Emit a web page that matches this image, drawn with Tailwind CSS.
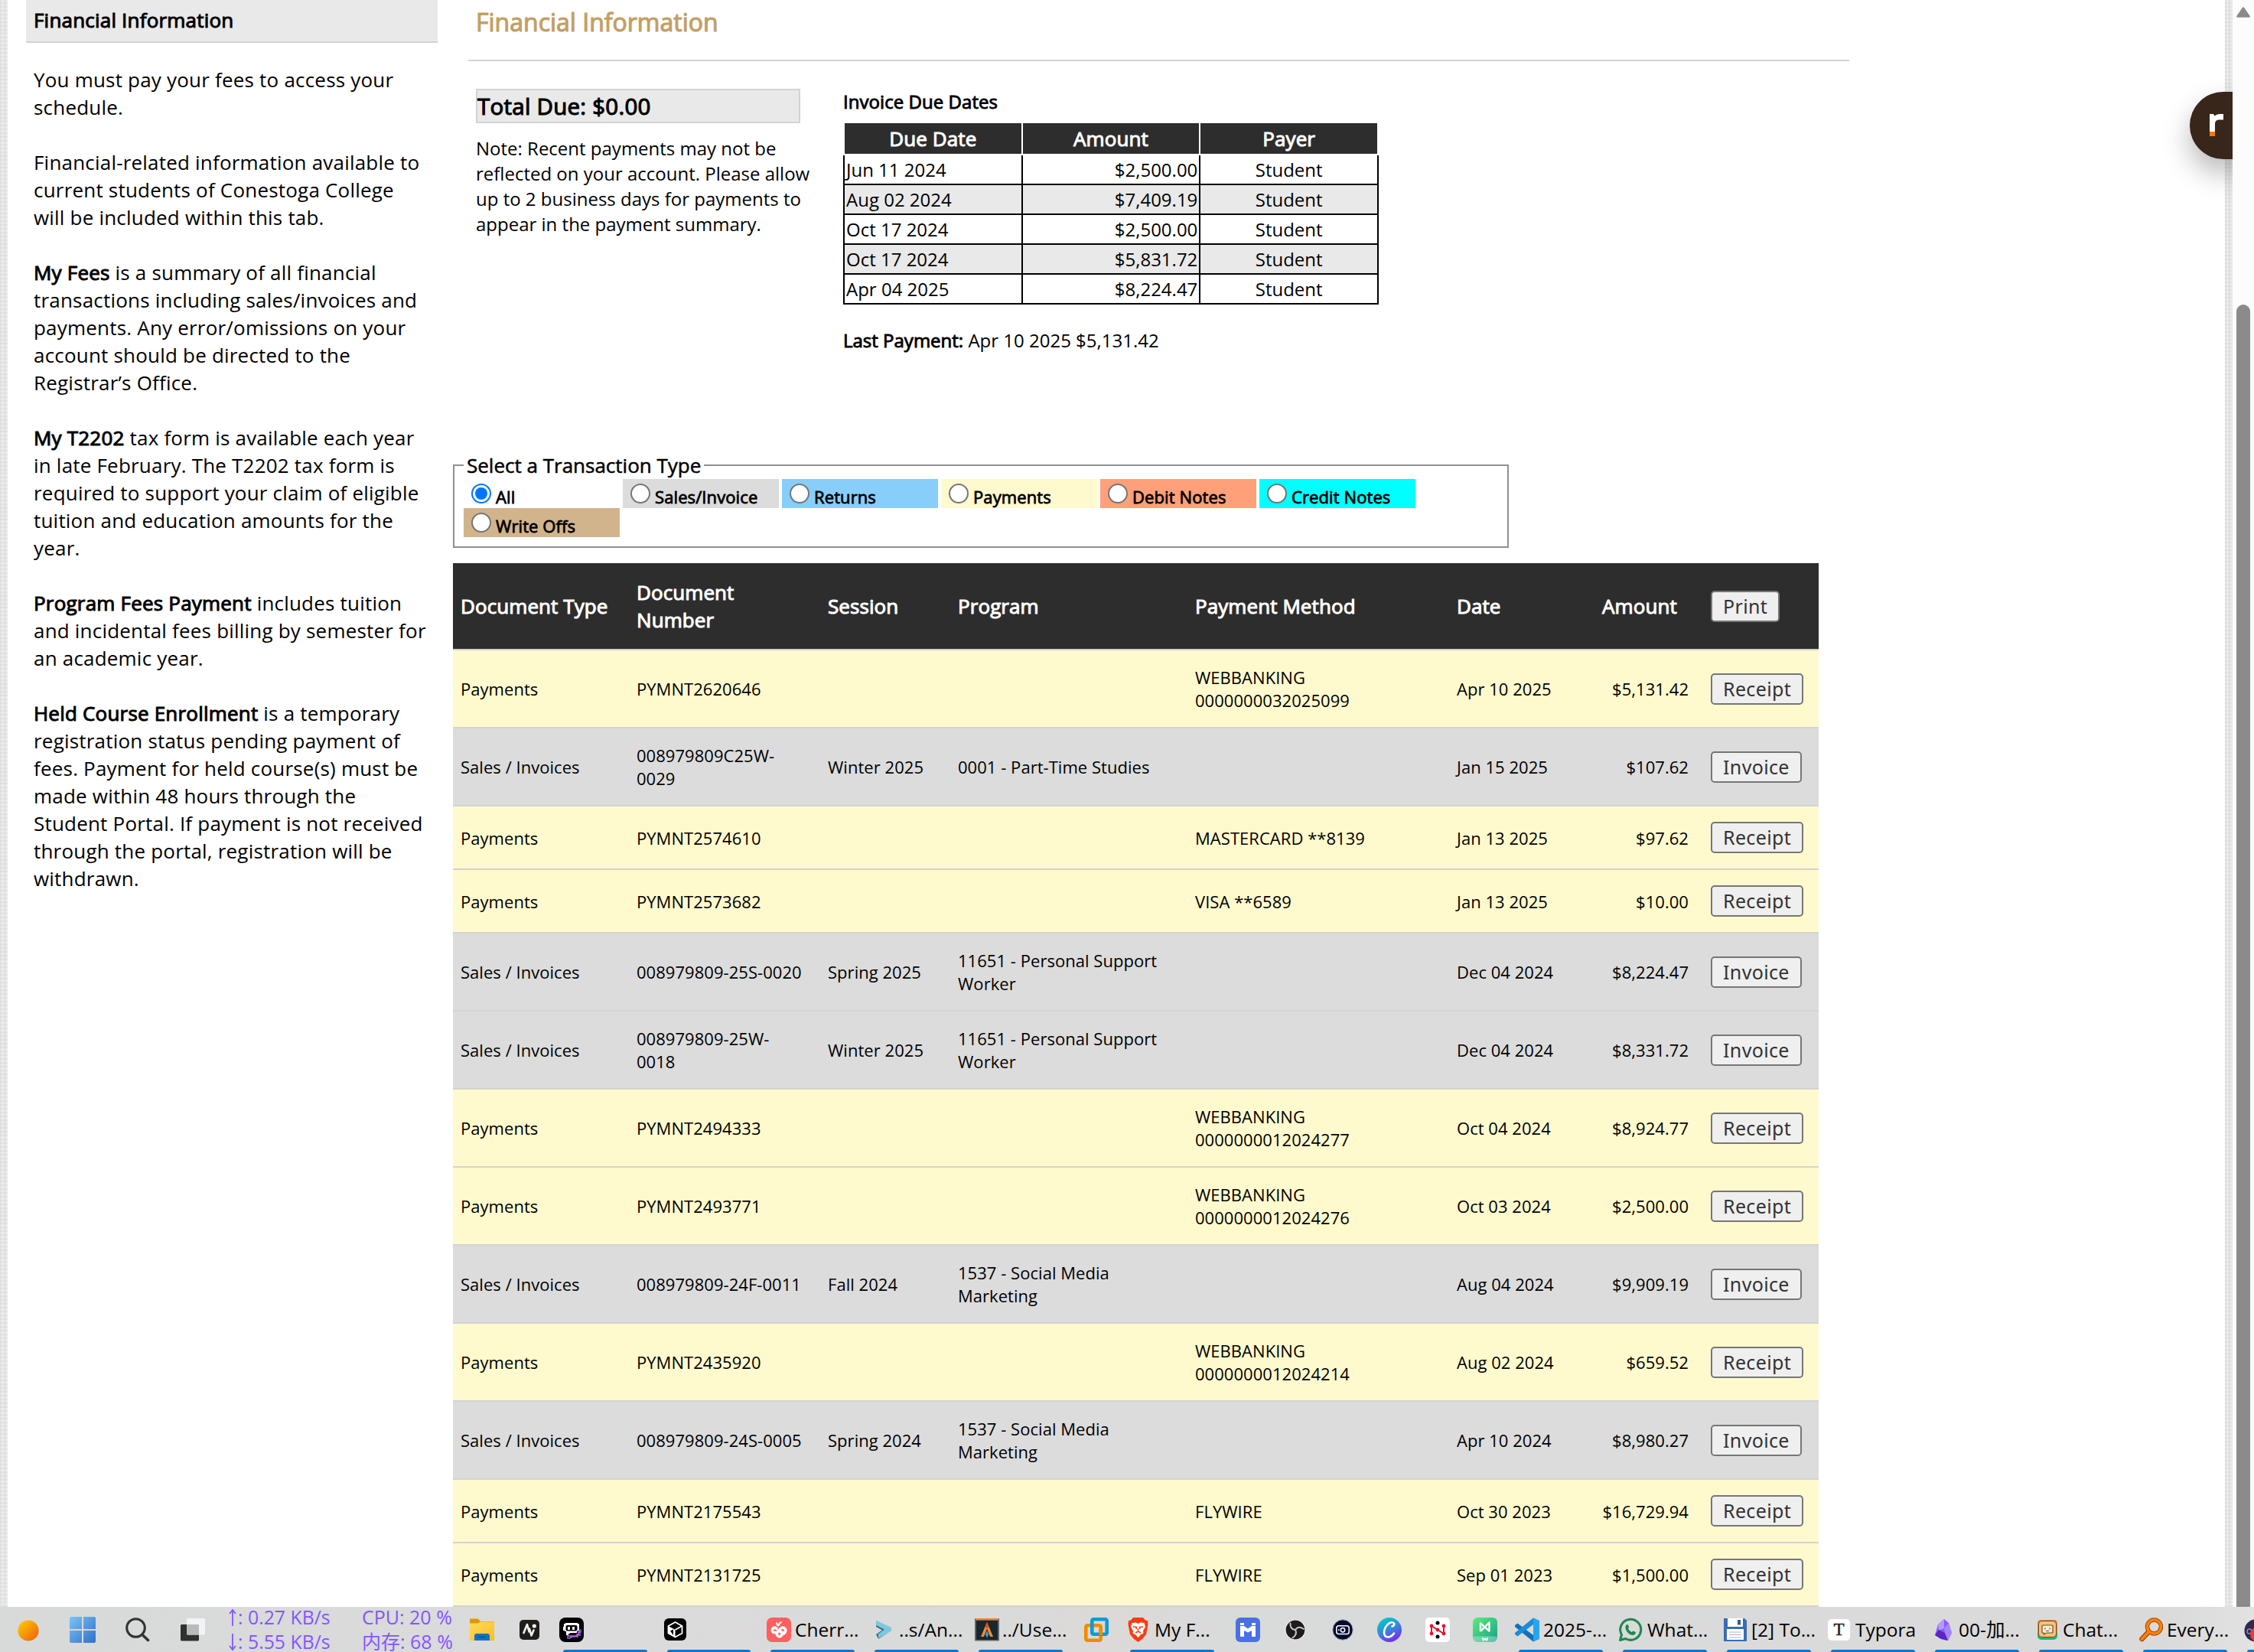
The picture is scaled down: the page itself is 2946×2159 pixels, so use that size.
<!DOCTYPE html>
<html lang="en">
<head>
<meta charset="utf-8">
<title>Financial Information</title>
<script src="https://cdn.jsdelivr.net/npm/@tailwindcss/browser@4"></script>
</head>
<body class="w-[2946px] h-[2159px] overflow-hidden flex flex-col bg-white text-black font-['Open_Sans','Noto_Sans_CJK_SC',sans-serif]">

<div class="flex h-[2100px] overflow-hidden">
  <div class="w-[10px] shrink-0 bg-[#ebebeb] bg-[repeating-linear-gradient(0deg,rgba(0,0,0,0.035)_0_2px,transparent_2px_5px),repeating-linear-gradient(90deg,rgba(0,0,0,0.035)_0_2px,transparent_2px_5px)]"></div>

  <!-- Left sidebar -->
  <aside class="w-[538px] ml-6 shrink-0 text-[26px] leading-[36px] tracking-[0.2px]">
    <h2 class="h-[56px] pt-[8px] pl-[10px] bg-[#e9e9e9] border-b-2 border-[#d3d3d3] [-webkit-text-stroke:1px_#000]">Financial Information</h2>
    <div class="mt-[30px] pl-[10px] flex flex-col gap-9 whitespace-nowrap">
      <p>You must pay your fees to access your<br>schedule.</p>
      <p>Financial-related information available to<br>current students of Conestoga College<br>will be included within this tab.</p>
      <p><b class="font-normal [-webkit-text-stroke:1px_#000]">My Fees</b> is a summary of all financial<br>transactions including sales/invoices and<br>payments. Any error/omissions on your<br>account should be directed to the<br>Registrar’s Office.</p>
      <p><b class="font-normal [-webkit-text-stroke:1px_#000]">My T2202</b> tax form is available each year<br>in late February. The T2202 tax form is<br>required to support your claim of eligible<br>tuition and education amounts for the<br>year.</p>
      <p><b class="font-normal [-webkit-text-stroke:1px_#000]">Program Fees Payment</b> includes tuition<br>and incidental fees billing by semester for<br>an academic year.</p>
      <p><b class="font-normal [-webkit-text-stroke:1px_#000]">Held Course Enrollment</b> is a temporary<br>registration status pending payment of<br>fees. Payment for held course(s) must be<br>made within 48 hours through the<br>Student Portal. If payment is not received<br>through the portal, registration will be<br>withdrawn.</p>
    </div>
  </aside>

  <!-- Main column -->
  <main class="ml-5 w-[2316px] shrink-0 flex flex-col">
    <h1 class="ml-5 w-[1805px] h-[80px] shrink-0 pl-[10px] pt-[9px] border-b-2 border-[#d3d3d3] text-[32px] leading-[40px] text-[#c39f62] [-webkit-text-stroke:1.1px_#c39f62]">Financial Information</h1>

    <div class="flex mt-9 h-[474px] shrink-0 pl-[30px] text-[24px] leading-[33px] whitespace-nowrap">
      <div class="w-[480px] shrink-0">
        <div class="w-[424px] h-[45px] border-2 border-[#d3d3d3] bg-[#e9e9e9] text-[29.5px] leading-[41px] tracking-[0.25px] [-webkit-text-stroke:1.1px_#000]">Total Due: $0.00</div>
        <p class="mt-4">Note: Recent payments may not be<br>reflected on your account. Please allow<br>up to 2 business days for payments to<br>appear in the payment summary.</p>
      </div>
      <div class="w-[700px]">
        <div class="tracking-[0.05px] [-webkit-text-stroke:0.9px_#000]">Invoice Due Dates</div>
        <div class="mt-3 grid grid-cols-3 gap-[2px] px-[2px] text-center text-[26px] leading-[40px] tracking-[0.1px] text-white [-webkit-text-stroke:1px_#fff]">
          <div class="bg-[#2d2d2d]">Due Date</div><div class="bg-[#2d2d2d]">Amount</div><div class="bg-[#2d2d2d]">Payer</div>
        </div>
        <div id="due" class="mt-[2px] grid grid-cols-3 gap-[2px] px-[2px] pb-[2px] bg-black leading-[37px]"></div>
        <p class="mt-[30px]"><b class="font-normal [-webkit-text-stroke:0.9px_#000]">Last Payment:</b> Apr 10 2025 $5,131.42</p>
      </div>
    </div>

    <fieldset class="w-[1380px] h-[126px] shrink-0 border-2 border-[#909090] pl-3">
      <legend class="px-[4px] text-[26px] leading-[36px] [-webkit-text-stroke:0.5px_#000]">Select a Transaction Type</legend>
      <div id="types" class="flex flex-wrap gap-x-1 w-[1250px]"></div>
    </fieldset>

    <section id="tx" class="mt-5 w-[1785px] shrink-0">
      <div class="h-[114px] grid grid-cols-[230px_250px_170px_311px_342px_189px_142px_151px] items-center bg-[#2d2d2d] border-b-2 border-[#d3d3d3] text-white text-[26px] leading-[36px] tracking-[0.08px] [-webkit-text-stroke:1px_#fff]">
        <div class="pl-[10px]">Document Type</div><div class="pl-[10px]">Document<br>Number</div><div class="pl-[10px]">Session</div><div class="pl-[10px]">Program</div><div class="pl-[9px]">Payment Method</div><div class="pl-[9px]">Date</div><div class="pl-[10px]">Amount</div>
        <div class="pl-[10px] [-webkit-text-stroke:0px]"><button class="block h-[41px] px-[14px] rounded-[5px] border-2 border-[#767676] bg-[#efefef] text-[#333] font-['Noto_Sans',sans-serif] text-[25px] leading-[37px] tracking-[0.35px]">Print</button></div>
      </div>
    </section>
  </main>

  <div class="w-[10px] shrink-0 bg-[#ebebeb] bg-[repeating-linear-gradient(0deg,rgba(0,0,0,0.035)_0_2px,transparent_2px_5px),repeating-linear-gradient(90deg,rgba(0,0,0,0.035)_0_2px,transparent_2px_5px)]"></div>

  <!-- Scrollbar -->
  <div class="relative z-10 w-[28px] shrink-0 bg-[#fcfcfc] flex flex-col items-center">
    <svg class="mt-[9px] w-[18px] h-[14px] shrink-0" viewBox="0 0 18 14"><path d="M9 1.5 16.5 12.5H1.5Z" fill="#8b8b8b" stroke="#8b8b8b" stroke-width="2.6" stroke-linejoin="round"/></svg>
    <div class="mt-[375px] w-[18px] grow rounded-t-[9px] bg-[#8b8b8b]"></div>
  </div>
</div>

<!-- Floating side badge -->
<div class="absolute left-[2822px] top-[60px] w-[96px] h-[220px] overflow-hidden">
  <div class="absolute left-[40px] top-[60px] w-[70px] h-[88px] rounded-l-[44px] bg-[#38261b] shadow-[0_18px_36px_rgba(0,0,0,0.28)]">
    <svg class="absolute left-[26px] top-[29px] w-[18px] h-[29px]" viewBox="0 0 18 29"><path d="M0 0H5L6.5 2.5Q9 0 13 0H18V7.500H12.500Q7 7.500 7 13V29H0Z" fill="#fff"/><path d="M0 23H7V29H0Z" fill="#ff7800"/></svg>
  </div>
</div>

<!-- Taskbar -->
<footer class="h-[59px] shrink-0 pl-[23px] flex whitespace-nowrap bg-[linear-gradient(90deg,#d8d9d9,#dbdbdb_25%,#d9dada_45%,#dcd9d8_49%,#d9dada_54%,#dadada_96%,#e2e2e2)] text-[24.5px]">
  <div class="w-[68px] shrink-0 pt-[17px]"><svg width="28" height="28" viewBox="0 0 28 28"><defs><linearGradient id="sun" x1="0" y1="0" x2="1" y2="1"><stop offset="0.1" stop-color="#fdc500"/><stop offset="1" stop-color="#ef5b0c"/></linearGradient></defs><circle cx="14" cy="14" r="13.600" fill="url(#sun)"/></svg></div>
  <div class="w-[73px] shrink-0 pt-[13px]"><svg width="34" height="34" viewBox="0 0 34 34"><defs><linearGradient id="win" gradientUnits="userSpaceOnUse" x1="0" y1="0" x2="34" y2="34"><stop offset="0" stop-color="#7cc4f6"/><stop offset="1" stop-color="#2f6fcb"/></linearGradient></defs><path fill="url(#win)" d="M2 0H16V16H0V2Q0 0 2 0ZM18 0H32Q34 0 34 2V16H18ZM0 18H16V34H2Q0 34 0 32ZM18 18H34V32Q34 34 32 34H18Z"/></svg></div>
  <div class="w-[72px] shrink-0 pt-[14px]"><svg width="32" height="32" viewBox="0 0 32 32" fill="none" stroke="#333" stroke-linecap="round"><circle cx="13.500" cy="13.500" r="11.800" stroke-width="3"/><path d="M22 22.500 29.500 29.500" stroke-width="3.600"/></svg></div>
  <div class="w-[63px] shrink-0 pt-[15px]"><svg width="32" height="30" viewBox="0 0 32 30"><rect x="0" y="8" width="24" height="21.500" rx="1.500" fill="#303030"/><rect x="8" y="0" width="24" height="21.500" rx="1.500" fill="#f3f3f4"/><path d="M8 8H24V21.500H9.500Q8 21.500 8 20Z" fill="#b9babb"/></svg></div>
  <div class="w-[175px] shrink-0 flex flex-col gap-[5px] text-[24.8px] leading-[27px] text-[#8257ff]">
    <div class="flex items-center gap-[2px]"><svg width="10" height="24" viewBox="0 0 10 24" fill="none" stroke="#8257ff" stroke-width="1.800"><path d="M5 23V2M1 7 5 2 9 7"/></svg>: 0.27 KB/s</div>
    <div class="flex items-center gap-[2px]"><svg width="10" height="24" viewBox="0 0 10 24" fill="none" stroke="#8257ff" stroke-width="1.800"><path d="M5 1V22M1 17 5 22 9 17"/></svg>: 5.55 KB/s</div>
  </div>
  <div class="w-[140px] shrink-0 flex flex-col gap-[5px] text-[25px] leading-[27px] -ml-[1px] mr-[1px] text-[#8257ff]"><div class="h-[27px]">CPU: 20 %</div><div class="h-[27px]">内存: 68 %</div></div>
  <div class="w-[65px] shrink-0 pt-[15px]"><svg width="32" height="29" viewBox="0 0 32 29"><defs><linearGradient id="fold" x1="0" y1="0" x2="1" y2="1"><stop offset="0" stop-color="#ffdb5c"/><stop offset="1" stop-color="#fbbc25"/></linearGradient></defs><path d="M0 1.500Q0 .5 1 .5H10.500L14 4H31Q32 4 32 5V9H0Z" fill="#dc9a00"/><path d="M0 6.500H11L14 4.500H32V29H0Z" fill="url(#fold)"/><path d="M6 29V23Q6 20 9 20H23Q26 20 26 23V29Z" fill="#0d72c7"/><path d="M10.500 24.500H21.500" stroke="#064e93" stroke-width="1.200"/></svg></div>
  <div class="w-[52px] shrink-0 pt-[17px]"><svg width="26" height="26" viewBox="0 0 26 26"><rect width="26" height="26" rx="5" fill="#1e1e1e"/><path d="M5.500 17 10 6 12.500 15.500M13 11.500 15.500 20.500 18.500 13.500" fill="none" stroke="#f4f1e8" stroke-width="2.600" stroke-linejoin="round" stroke-linecap="round"/><circle cx="19.300" cy="8" r="2.600" fill="#f4f1e8"/></svg></div>
  <div class="relative w-[137px] shrink-0 pt-[14px]"><svg width="32" height="32" viewBox="0 0 32 32"><rect width="32" height="32" rx="8" fill="#000"/><path d="M11 25V27H14V26H16V25H24V23H27V19H28V15" fill="none" stroke="#6b72ff" stroke-width="1.500"/><path d="M11 22V24H23V22H25V19H26V16" fill="none" stroke="#e45bd8" stroke-width="1.500"/><path d="M8 7H24V8H26V17H24V18H23V20H14V21H12V23H9V18H7V17H5V12H6V8H8Z" fill="#fff"/><rect x="8.500" y="10" width="15" height="7.500" rx="2" fill="#000"/><path d="M11 12H14V16H11ZM17 12H20V16H17Z" fill="#fff"/></svg><i class="absolute left-[5px] bottom-0 w-[110px] h-[3px] rounded-t-[3px] bg-[#0078d7]"></i></div>
  <div class="relative w-[134px] shrink-0 pt-[15px]"><svg width="29" height="29" viewBox="0 0 29 29"><rect width="29" height="29" rx="6" fill="#000"/><path d="M14.500 5 23.500 10V19.500L14.500 24.500 5.500 19.500V10Z" fill="none" stroke="#fff" stroke-width="1.800" stroke-linejoin="round"/><path d="M5.500 10 14.500 15V24.500L5.500 19.500Z" fill="#fff"/><path d="M14.500 15 23.500 10" stroke="#fff" stroke-width="1.800"/><path d="M8 16.500 12 14.500V22Z" fill="#000"/></svg><i class="absolute left-[4px] bottom-0 w-[109px] h-[3px] rounded-t-[3px] bg-[#0078d7]"></i></div>
  <div class="relative w-[142px] shrink-0 flex pt-[14px]"><svg class="w-[37px] shrink-0 pr-[5px]" width="37" height="32" viewBox="0 0 32 32"><rect width="32" height="32" rx="7" fill="#ff5f5f"/><path d="M13 14.500Q10 11.500 7.500 15 6.500 20 11.500 19.500M16 17Q12 20 14 23.500 18 27 20 22M20 22Q25.500 20 24.500 15.500 22 11 18 14.500 15.500 18 20 19" fill="none" stroke="#fff" stroke-width="3.600" stroke-linecap="round"/><path d="M16 10.500Q13 10 13 6.500M16 10.500Q16 7 19.500 6" fill="none" stroke="#fff" stroke-width="2"/></svg><span class="leading-[33px] -mt-[1px]">Cherr...</span><i class="absolute left-[5px] bottom-0 w-[110px] h-[3px] rounded-t-[3px] bg-[#0078d7]"></i></div>
  <div class="relative w-[130px] shrink-0 flex pt-[14px]"><svg class="w-[31px] shrink-0 pr-[9px]" width="31" height="32" viewBox="0 0 22 32"><path d="M1 4 19 13V18L4 28 1 22 9 16.500 1 12Z" fill="#3d6b82"/><path d="M1 4 21 13 21 17.500 4 27V21.500L12 15.500 1 10Z" fill="#7cc9df"/></svg><span class="leading-[33px] -mt-[1px]">..s/An...</span><i class="absolute left-[-1px] bottom-0 w-[110px] h-[3px] rounded-t-[3px] bg-[#0078d7]"></i></div>
  <div class="relative w-[143px] shrink-0 flex pt-[14px]"><svg class="w-[36px] shrink-0 pr-[4px]" width="36" height="32" viewBox="0 0 32 32"><rect x="0" y="1" width="32" height="29.500" rx="1" fill="#61676b"/><rect x="2" y="4" width="28" height="25" fill="#18262e"/><rect x="1" y="1" width="30" height="2.200" fill="#f0812d"/><path d="M16 6 24 25H20L16 14.500 12 25H8Z" fill="#f58b30"/><path d="M16 6 18.500 12 16 14.500 13.500 12Z" fill="#e04d29"/><path d="M16 17 18 22 16 26.500 14 22Z" fill="#35a4f0"/></svg><span class="leading-[33px] -mt-[1px]">../Use...</span><i class="absolute left-[5px] bottom-0 w-[110px] h-[3px] rounded-t-[3px] bg-[#0078d7]"></i></div>
  <div class="w-[57px] shrink-0 pt-[14px]"><svg width="32" height="32" viewBox="0 0 32 32" fill="none" stroke-width="4.600"><rect x="2.300" y="10.300" width="19.400" height="19.400" rx="2" stroke="#f38b00"/><rect x="10.300" y="2.300" width="19.400" height="19.400" rx="2" stroke="#0d9bd8"/><path d="M21.700 14V23" stroke="#f38b00"/></svg></div>
  <div class="relative w-[141px] shrink-0 flex pt-[14px]"><svg class="w-[35px] shrink-0 pr-[8px]" width="35" height="32" viewBox="0 0 27 32"><path d="M7 0H20L23 3.500 26 4 26.500 9 24 22 19 28 13.500 32 8 28 3 22 .5 9 1 4 4 3.500Z" fill="#fb3b12"/><path d="M5.500 7 10.500 6.500 13.500 8 16.500 6.500 21.500 7 23 12 20 17.500 20.500 20.500 16.500 22.500 13.500 26.500 10.500 22.500 6.500 20.500 7 17.500 4 12Z" fill="#fff"/><path d="M7 12 11.500 12.500 11 15M20 12 15.500 12.500 16 15M13.500 14V18M10 20 13.500 18 17 20" fill="none" stroke="#fb3b12" stroke-width="1.500"/></svg><span class="leading-[33px] -mt-[1px]">My F...</span><i class="absolute left-[3px] bottom-0 w-[110px] h-[3px] rounded-t-[3px] bg-[#0078d7]"></i></div>
  <div class="w-[65px] shrink-0 pt-[14px]"><svg width="32" height="32" viewBox="0 0 32 32"><rect width="32" height="32" rx="6" fill="#4a70e2"/><path d="M6 7H11V10H6ZM21 7H26V10H21ZM6 11H11L16 14.500 21 11H26V25H21V17L16 19.500 11 17V25H6Z" fill="#fff"/></svg></div>
  <div class="w-[62px] shrink-0 pt-[16px] -ml-[1px] mr-[1px]"><svg width="28" height="28" viewBox="0 0 28 28"><circle cx="14" cy="14" r="13" fill="#1d1b1c" stroke="#efefef" stroke-width="1.200"/><path d="M14 14Q7 13.500 7.500 5.500M14 14Q18 8 25 13M14 14Q17 20 10.500 24.500" fill="none" stroke="#c4c4c4" stroke-width="2" stroke-linecap="round"/></svg></div>
  <div class="w-[58px] shrink-0 pt-[16px] -ml-[1px] mr-[1px]"><svg width="28" height="28" viewBox="0 0 28 28"><circle cx="14" cy="14" r="13.200" fill="#030a33" stroke="#a9a9ad" stroke-width="1"/><rect x="5.800" y="8.800" width="16.400" height="10.800" rx="3" fill="none" stroke="#fff" stroke-width="1.500"/><circle cx="14" cy="14.200" r="2.700" fill="none" stroke="#fff" stroke-width="1.500"/><circle cx="8.800" cy="14.200" r=".9" fill="#fff"/></svg></div>
  <div class="w-[63px] shrink-0 pt-[14px]"><svg width="32" height="32" viewBox="0 0 32 32"><defs><linearGradient id="cv" x1="0.200" y1="0" x2="0.700" y2="1"><stop offset="0.100" stop-color="#05c3cc"/><stop offset="0.550" stop-color="#3f7fe0"/><stop offset="1" stop-color="#7a22f0"/></linearGradient></defs><circle cx="16" cy="16" r="16" fill="url(#cv)"/><path d="M19.500 11.500Q23 10.500 22 7.500 20 5 15.500 7.500 9.500 12 9 19 9 25.500 14 25.500 18.500 25.500 22 20.500" fill="none" stroke="#fff" stroke-width="2.600" stroke-linecap="round"/></svg></div>
  <div class="w-[62px] shrink-0 pt-[14px]"><svg width="32" height="32" viewBox="0 0 32 32"><rect width="32" height="32" rx="5" fill="#fff"/><path d="M8 21V11L24 21V11" fill="none" stroke="#e8112d" stroke-width="2"/><g fill="#e8112d"><circle cx="8" cy="11" r="2.400"/><circle cx="8" cy="21" r="2.400"/><circle cx="24" cy="11" r="2.400"/><circle cx="24" cy="21" r="2.400"/><circle cx="16" cy="16" r="2.400"/></g><circle cx="16" cy="7" r="2.500"/><circle cx="16" cy="25" r="2.500"/></svg></div>
  <div class="w-[55px] shrink-0 pt-[14px]"><svg width="32" height="32" viewBox="0 0 32 32"><defs><linearGradient id="gr" x1="0" y1="0" x2="1" y2="1"><stop offset="0" stop-color="#58ee78"/><stop offset="1" stop-color="#1aa08b"/></linearGradient></defs><rect width="32" height="32" rx="6" fill="url(#gr)"/><path d="M0 25Q16 23.500 32 25V26Q32 32 26 32H6Q0 32 0 26Z" fill="#fff" opacity=".3"/><path d="M10 18V7.500L21.500 17.500V6.500L10 18" fill="none" stroke="#fff" stroke-width="2.400" stroke-linejoin="round"/><path d="M12.500 26.500 14 29.500 16 27.500 18 29.500 19.500 26.500" fill="none" stroke="#fff" stroke-width="1.800"/></svg></div>
  <div class="relative w-[135px] shrink-0 flex pt-[14px]"><svg class="w-[37px] shrink-0 pr-[5px]" width="37" height="32" viewBox="0 0 32 32"><path d="M0 10 3.500 7.500 24 23V31.500L0 12Z" fill="#0f72b9"/><path d="M0 22 3.500 24.500 24 9V.5L0 20Z" fill="#1a8cd8"/><path d="M24 .3 32 4V28L24 31.700Z" fill="#27a5f3"/></svg><span class="leading-[33px] -mt-[1px]">2025-...</span><i class="absolute left-[5px] bottom-0 w-[110px] h-[3px] rounded-t-[3px] bg-[#0078d7]"></i></div>
  <div class="relative w-[138px] shrink-0 flex pt-[14px]"><svg class="w-[38px] shrink-0 pr-[6px]" width="38" height="32" viewBox="0 0 32 32"><path d="M2.500 29.500 4.500 22.500A13.500 13.500 0 1 1 9.500 27.500Z" fill="none" stroke="#1d8750" stroke-width="3" stroke-linejoin="round"/><path d="M10.500 9.500Q12 8.500 13 9.500L14.200 12.500 13 14.500Q14.500 17.500 17.500 19L19.500 17.500 22.800 19Q23 22.500 19.500 23 15 23 11.500 18.500 8 13.500 10.500 9.500Z" fill="#1d8750"/></svg><span class="leading-[33px] -mt-[1px]">What...</span><i class="absolute left-[6px] bottom-0 w-[110px] h-[3px] rounded-t-[3px] bg-[#0078d7]"></i></div>
  <div class="relative w-[136px] shrink-0 flex pt-[14px]"><svg class="w-[36px] shrink-0 pr-[6px]" width="36" height="32" viewBox="0 0 30 32"><path d="M0 1H27L30 4V31H0Z" fill="#3a6db3"/><path d="M5 1H25V12H5Z" fill="#fff"/><path d="M18 3H22V9.500H18Z" fill="#2b5ba0"/><path d="M4 15H26V29H4Z" fill="#fff"/><path d="M7 19H23M7 22.500H23M7 26H23" stroke="#a8b4c4" stroke-width="1"/></svg><span class="leading-[33px] -mt-[1px]">[2] To...</span><i class="absolute left-[4px] bottom-0 w-[110px] h-[3px] rounded-t-[3px] bg-[#0078d7]"></i></div>
  <div class="relative w-[140px] shrink-0 flex pt-[14px]"><svg class="w-[36px] shrink-0 pr-[7px]" width="36" height="32" viewBox="0 0 29 32"><rect x="0" y="2" width="29" height="28" rx="5" fill="#fff"/><text x="14.500" y="23" text-anchor="middle" font-family="Liberation Serif, serif" font-size="23" fill="#222" stroke="#222" stroke-width=".5">T</text></svg><span class="leading-[33px] -mt-[1px]">Typora</span><i class="absolute left-[4px] bottom-0 w-[110px] h-[3px] rounded-t-[3px] bg-[#0078d7]"></i></div>
  <div class="relative w-[134px] shrink-0 flex pt-[14px]"><svg class="w-[31px] shrink-0 pr-[9px]" width="31" height="32" viewBox="0 0 22 32"><path d="M12 2 18 7 22 20 17 30 8 28 0 23 4 9Z" fill="#8b5cf6"/><path d="M12 2 4 9 5 17 12 14Z" fill="#b49afc"/><path d="M0 23 5 16 13 20 17 30 8 28Z" fill="#5b24c4"/><path d="M12 14 18 7 22 20 17 30 13 20Z" fill="#a586fa"/></svg><span class="leading-[33px] -mt-[1px]">00-加...</span><i class="absolute left-0 bottom-0 w-[110px] h-[3px] rounded-t-[3px] bg-[#0078d7]"></i></div>
  <div class="relative w-[133px] shrink-0 flex pt-[14px]"><svg class="w-[33px] shrink-0 pr-[7px]" width="33" height="32" viewBox="0 0 26 32"><rect y="3" width="26" height="26" rx="5" fill="#2bb07a"/><path d="M0 20V8Q0 3 5 3H21Q26 3 26 8V20Z" fill="#ee8352"/><rect x="1.500" y="4.500" width="23" height="21" rx="4" fill="#f7c272" stroke="#6d4a2a" stroke-width="1"/><path d="M7 10H19Q20 10 20 11V19Q20 20 19 20H12L8.500 22V20H7Q6 20 6 19V11Q6 10 7 10Z" fill="#fdebd8" stroke="#6d4a2a" stroke-width="1.200"/><path d="M10 13.500V15.500M16 13.500V15.500M11 17.500H15" stroke="#6d4a2a" stroke-width="1.200"/></svg><span class="leading-[33px] -mt-[1px]">Chat...</span><i class="absolute left-[2px] bottom-0 w-[110px] h-[3px] rounded-t-[3px] bg-[#0078d7]"></i></div>
  <div class="relative w-[137px] shrink-0 flex pt-[14px]"><svg class="w-[36px] shrink-0 pr-[5px]" width="36" height="32" viewBox="0 0 31 32"><g fill="none" stroke-linecap="round"><path d="M12 19 3.500 28" stroke="#a84300" stroke-width="6.500"/><circle cx="19.500" cy="12" r="9" stroke="#a84300" stroke-width="5.500"/><circle cx="19.500" cy="12" r="9" stroke="#ff8100" stroke-width="3.500"/><path d="M12 19 3.500 28" stroke="#ff8100" stroke-width="4"/></g></svg><span class="leading-[33px] -mt-[1px]">Every...</span><i class="absolute left-[5px] bottom-0 w-[110px] h-[3px] rounded-t-[3px] bg-[#0078d7]"></i></div>
  <div class="relative w-[13px] shrink-0 pt-[16px] overflow-hidden"><svg width="13" height="30" viewBox="0 0 13 30"><circle cx="15" cy="15" r="14.500" fill="#2f2a4a"/><circle cx="7" cy="16" r="3" fill="none" stroke="#8f86d8" stroke-width="1.500"/><circle cx="18" cy="20" r="10" fill="#f03838"/></svg><i class="absolute left-[4px] bottom-0 w-[20px] h-[3px] rounded-tl-[3px] bg-[#0078d7]"></i></div>
</footer>

<script>
const due = [['Jun 11 2024','$2,500.00'],['Aug 02 2024','$7,409.19'],['Oct 17 2024','$2,500.00'],['Oct 17 2024','$5,831.72'],['Apr 04 2025','$8,224.47']];
document.getElementById('due').innerHTML = due.map(([d, a], i) => {
  const bg = i % 2 ? 'bg-[#e9e9e9]' : 'bg-white';
  return `<div class="${bg} pl-[2px]">${d}</div><div class="${bg} pr-[2px] text-right">${a}</div><div class="${bg} text-center">Student</div>`;
}).join('');

const types = [['All','bg-white'],['Sales/Invoice','bg-[#dcdcdc]'],['Returns','bg-[#87cefa]'],['Payments','bg-[#fffacd]'],['Debit Notes','bg-[#ffa07a]'],['Credit Notes','bg-[#00ffff]'],['Write Offs','bg-[#d2b48c]']];
document.getElementById('types').innerHTML = types.map(([t, bg], i) => {
  const radio = i === 0
    ? '<span class="mt-[6px] size-[26px] rounded-full border-[2.500px] border-[#0075ff] bg-white p-[3px]"><span class="block size-full rounded-full bg-[#0075ff]"></span></span>'
    : '<span class="mt-[6px] size-[26px] rounded-full border-2 border-[#767676] bg-white"></span>';
  return `<label class="${bg} w-[204px] h-[38px] pl-[10px] flex items-start">${radio}<span class="ml-[6px] mt-[8px] text-[22px] leading-[30px] tracking-[0.1px] [-webkit-text-stroke:0.8px_#000]">${t}</span></label>`;
}).join('');

const rows = [
  ['P','PYMNT2620646','','','WEBBANKING<br>0000000032025099','Apr 10 2025','$5,131.42'],
  ['S','008979809C25W-<br>0029','Winter 2025','0001 - Part-Time Studies','','Jan 15 2025','$107.62'],
  ['P','PYMNT2574610','','','MASTERCARD **8139','Jan 13 2025','$97.62'],
  ['P','PYMNT2573682','','','VISA **6589','Jan 13 2025','$10.00'],
  ['S','008979809-25S-0020','Spring 2025','11651 - Personal Support<br>Worker','','Dec 04 2024','$8,224.47'],
  ['S','008979809-25W-<br>0018','Winter 2025','11651 - Personal Support<br>Worker','','Dec 04 2024','$8,331.72'],
  ['P','PYMNT2494333','','','WEBBANKING<br>0000000012024277','Oct 04 2024','$8,924.77'],
  ['P','PYMNT2493771','','','WEBBANKING<br>0000000012024276','Oct 03 2024','$2,500.00'],
  ['S','008979809-24F-0011','Fall 2024','1537 - Social Media<br>Marketing','','Aug 04 2024','$9,909.19'],
  ['P','PYMNT2435920','','','WEBBANKING<br>0000000012024214','Aug 02 2024','$659.52'],
  ['S','008979809-24S-0005','Spring 2024','1537 - Social Media<br>Marketing','','Apr 10 2024','$8,980.27'],
  ['P','PYMNT2175543','','','FLYWIRE','Oct 30 2023','$16,729.94'],
  ['P','PYMNT2131725','','','FLYWIRE','Sep 01 2023','$1,500.00']
];
document.getElementById('tx').insertAdjacentHTML('beforeend', rows.map(r => {
  const pay = r[0] === 'P';
  const bg = pay ? 'bg-[#fffacd]' : 'bg-[#dcdcdc]';
  const h = r.join('').includes('<br>') ? 'h-[102px]' : 'h-[83px]';
  const cells = [pay ? 'Payments' : 'Sales / Invoices', ...r.slice(1, 6)].map((c, i) => `<div class="${i < 4 ? 'pl-[10px]' : 'pl-[9px]'}">${c}</div>`).join('');
  return `<div class="${h} ${bg} grid grid-cols-[230px_250px_170px_311px_342px_189px_142px_151px] items-center border-b-2 border-[#d3d3d3] text-[22px] leading-[30px] tracking-[0.04px] whitespace-nowrap">${cells}<div class="pr-[19px] text-right">${r[6]}</div><div class="pl-[10px]"><button class="block h-[41px] px-[14px] rounded-[5px] border-2 border-[#767676] bg-[#efefef] text-[#333] font-['Noto_Sans',sans-serif] text-[25px] leading-[37px] tracking-[0.35px]">${pay ? 'Receipt' : 'Invoice'}</button></div></div>`;
}).join(''));
</script>
</body>
</html>
